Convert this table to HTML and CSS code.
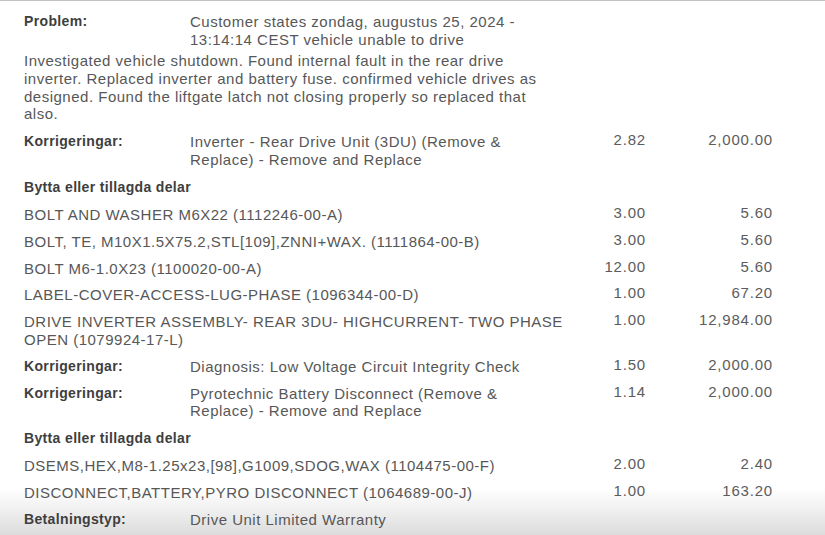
FILE: index.html
```html
<!DOCTYPE html>
<html lang="sv">
<head>
<meta charset="utf-8">
<title>Arbetsorder</title>
<link rel="stylesheet" href="styles.css">
</head>
<body>
<div class="doc">
  <div class="row first">
    <div class="label">Problem:</div>
    <div class="desc">Customer states zondag, augustus 25, 2024 - 13:14:14 CEST vehicle unable to drive</div>
  </div>
  <p class="note">Investigated vehicle shutdown. Found internal fault in the rear drive inverter. Replaced inverter and battery fuse. confirmed vehicle drives as designed. Found the liftgate latch not closing properly so replaced that also.</p>
  <div class="row">
    <div class="label">Korrigeringar:</div>
    <div class="desc">Inverter - Rear Drive Unit (3DU) (Remove &amp; Replace) - Remove and Replace</div>
    <div class="num">2.82</div>
    <div class="num">2,000.00</div>
  </div>
  <div class="row section"><div class="label">Bytta eller tillagda delar</div></div>
  <div class="row part">
    <div class="name">BOLT AND WASHER M6X22 (1112246-00-A)</div>
    <div class="num">3.00</div>
    <div class="num">5.60</div>
  </div>
  <div class="row part">
    <div class="name">BOLT, TE, M10X1.5X75.2,STL[109],ZNNI+WAX. (1111864-00-B)</div>
    <div class="num">3.00</div>
    <div class="num">5.60</div>
  </div>
  <div class="row part">
    <div class="name">BOLT M6-1.0X23 (1100020-00-A)</div>
    <div class="num">12.00</div>
    <div class="num">5.60</div>
  </div>
  <div class="row part">
    <div class="name">LABEL-COVER-ACCESS-LUG-PHASE (1096344-00-D)</div>
    <div class="num">1.00</div>
    <div class="num">67.20</div>
  </div>
  <div class="row part">
    <div class="name">DRIVE INVERTER ASSEMBLY- REAR 3DU- HIGHCURRENT- TWO PHASE OPEN (1079924-17-L)</div>
    <div class="num">1.00</div>
    <div class="num">12,984.00</div>
  </div>
  <div class="row">
    <div class="label">Korrigeringar:</div>
    <div class="desc">Diagnosis: Low Voltage Circuit Integrity Check</div>
    <div class="num">1.50</div>
    <div class="num">2,000.00</div>
  </div>
  <div class="row">
    <div class="label">Korrigeringar:</div>
    <div class="desc">Pyrotechnic Battery Disconnect (Remove &amp; Replace) - Remove and Replace</div>
    <div class="num">1.14</div>
    <div class="num">2,000.00</div>
  </div>
  <div class="row section"><div class="label">Bytta eller tillagda delar</div></div>
  <div class="row part">
    <div class="name">DSEMS,HEX,M8-1.25x23,[98],G1009,SDOG,WAX (1104475-00-F)</div>
    <div class="num">2.00</div>
    <div class="num">2.40</div>
  </div>
  <div class="row part">
    <div class="name">DISCONNECT,BATTERY,PYRO DISCONNECT (1064689-00-J)</div>
    <div class="num">1.00</div>
    <div class="num">163.20</div>
  </div>
  <div class="row">
    <div class="label">Betalningstyp:</div>
    <div class="desc">Drive Unit Limited Warranty</div>
  </div>
</div>
</body>
</html>
```

FILE: styles.css
```css
html {
  height: 100%;
  background: linear-gradient(to bottom, #ffffff 0, #ffffff 488px, #f1f1f1 508px, #dcdcdc 535px);
}
body {
  margin: 0;
  min-height: 534px;
  border-top: 1px solid #c3c3c3;
  font-family: "Liberation Sans", Arial, sans-serif;
  font-size: 15px;
  letter-spacing: 0.5px;
  line-height: 17.6px;
  color: #575757;
}
.doc {
  padding: 7.4px 0 0 24px;
}
.row {
  display: grid;
  grid-template-columns: 166px 380px 76px 127px;
  padding: 4.65px 0;
}
.row.first {
  padding-bottom: 0;
}
.label {
  font-size: 14px;
  font-weight: bold;
  letter-spacing: 0.35px;
  color: #3e3e3e;
  white-space: nowrap;
}
.desc {
  max-width: 356px;
}
.name {
  grid-column: 1 / 3;
}
.num {
  text-align: right;
  color: #5c5c5c;
  letter-spacing: 0.8px;
  margin-top: -2px;
}
.num + .num {
  grid-column: 4;
}
.note {
  margin: 0;
  width: 532px;
  padding: 4.2px 0 5.7px;
}
.section {
  padding-top: 6px;
}
```
